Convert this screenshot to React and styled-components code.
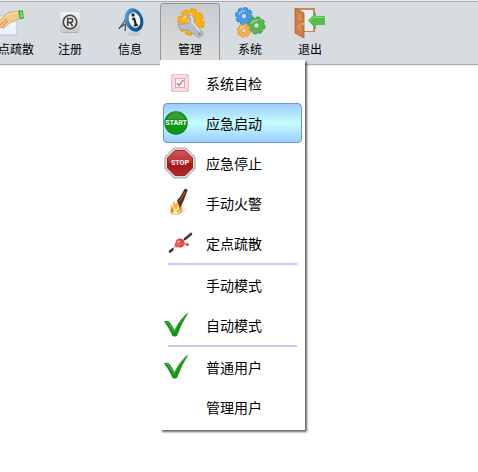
import { useState } from "react";
import styled, { createGlobalStyle } from "styled-components";

const tools = [
  { id: "evacuate", label: "定点疏散", Icon: HandIcon },
  { id: "register", label: "注册", Icon: RegisterIcon },
  { id: "info", label: "信息", Icon: InfoIcon },
  { id: "manage", label: "管理", Icon: WrenchIcon },
  { id: "system", label: "系统", Icon: GearsIcon },
  { id: "exit", label: "退出", Icon: ExitIcon },
];

const groups = [
  [
    { id: "check", label: "系统自检", Icon: SelfCheckIcon },
    { id: "start", label: "应急启动", Icon: StartIcon },
    { id: "stop", label: "应急停止", Icon: StopIcon },
    { id: "fire", label: "手动火警", Icon: TorchIcon },
    { id: "point", label: "定点疏散", Icon: PointIcon },
  ],
  [
    { id: "manual", label: "手动模式" },
    { id: "auto", label: "自动模式", Icon: TickIcon },
  ],
  [
    { id: "user", label: "普通用户", Icon: TickIcon },
    { id: "admin", label: "管理用户" },
  ],
];

export default function App() {
  const [open, setOpen] = useState(true);
  const [selected, setSelected] = useState("start");

  return (
    <>
      <GlobalStyle />
      <Toolbar>
        {tools.map(({ id, label, Icon }) => (
          <ToolSlot key={id}>
            <ToolButton
              type="button"
              $active={id === "manage" && open}
              onClick={() => setOpen(id === "manage" ? !open : false)}
            >
              <Icon />
              <span>{label}</span>
            </ToolButton>
            {id === "manage" && open && (
              <Menu role="menu">
                {groups.map((items, index) => (
                  <Group key={index} role="group">
                    {items.map((item) => (
                      <MenuItem
                        key={item.id}
                        type="button"
                        role="menuitem"
                        $selected={item.id === selected}
                        onMouseEnter={() => setSelected(item.id)}
                      >
                        <IconCell>{item.Icon && <item.Icon />}</IconCell>
                        <span>{item.label}</span>
                      </MenuItem>
                    ))}
                  </Group>
                ))}
              </Menu>
            )}
          </ToolSlot>
        ))}
      </Toolbar>
    </>
  );
}

function HandIcon() {
  return (
    <Picture viewBox="0 0 32 32">
      <path d="M4 9h19v19H4z" fill="#eef3fb" stroke="#b3c6e2" />
      <path d="M2 17l9-9q4-3 7-3l8-1v7l-5 3-4 1-7 6q-2 1-2-1l-4 2q-2 0-1-2z" fill="#f2c98b" stroke="#c99150" strokeWidth=".6" />
      <path d="M8 20l6-6M6 18l7-6" stroke="#bd8544" fill="none" />
      <path d="M13 8l6-2 5-1" stroke="#fde7bd" fill="none" />
      <path d="M24 3.500l5 0 1 8-4 1z" fill="#35b535" />
      <path d="M26 5l2 0 1 5-2 1z" fill="#8be179" />
    </Picture>
  );
}

function RegisterIcon() {
  return (
    <Picture viewBox="0 0 32 32">
      <defs>
        <linearGradient id="plate" x2="0" y2="1">
          <stop stopColor="#f4f4f4" />
          <stop offset="1" stopColor="#c3c5c6" />
        </linearGradient>
      </defs>
      <rect x="6" y="5" width="20" height="20.500" rx="3" fill="url(#plate)" />
      <path d="M8 25.500h16" stroke="#aeb1b3" />
      <circle cx="16" cy="15" r="6.700" fill="#ededed" stroke="#414141" strokeWidth="1.600" />
      <path d="M13.700 19v-7.500h2.800q2.200 0 2.200 2t-2.200 2h-2.500M16 15.500l2.700 3.500" fill="none" stroke="#414141" strokeWidth="1.600" />
    </Picture>
  );
}

function InfoIcon() {
  return (
    <Picture viewBox="0 0 32 32">
      <defs>
        <linearGradient id="ring" x2="1" y2="1">
          <stop stopColor="#78b6e5" />
          <stop offset=".5" stopColor="#1769ad" />
          <stop offset="1" stopColor="#0d4379" />
        </linearGradient>
      </defs>
      <ellipse cx="20" cy="27" rx="7" ry="2" fill="#c5cacf" />
      <path d="M12 12L5 22M12 14l-1 10M5 21l8-5" stroke="#4a4e53" strokeWidth="1.300" fill="none" />
      <ellipse cx="20" cy="13" rx="9" ry="12" fill="url(#ring)" transform="rotate(-18 20 13)" />
      <ellipse cx="20.500" cy="13" rx="5.600" ry="8" fill="#f6f7f7" transform="rotate(-18 20.500 13)" />
      <circle cx="19" cy="8" r="1.700" fill="#20252b" />
      <path d="M18 11l3-.5 2 7h1v1.500l-4 .5-.4-1.500 1-.5-1.200-4.500-1 .2z" fill="#20252b" />
    </Picture>
  );
}

function Gear({ cx, cy, r, fill, edge, hole }) {
  return (
    <g transform={`translate(${cx} ${cy}) scale(${r / 10})`}>
      {[0, 45, 90, 135].map((angle) => (
        <rect key={angle} x="-2.500" y="-10" width="5" height="20" rx="1" fill={fill} stroke={edge} strokeWidth=".8" transform={`rotate(${angle + 12})`} />
      ))}
      <circle r="7.600" fill={fill} />
      <path d="M-6 -2Q-4 -6 1 -6" stroke="#ffffff" strokeOpacity=".5" fill="none" strokeWidth="1.500" />
      <circle r="3.200" fill={hole} stroke={edge} strokeWidth=".8" />
    </g>
  );
}

function WrenchIcon() {
  return (
    <Picture viewBox="0 0 32 32">
      <Gear cx={17} cy={15} r={13} fill="#fbb013" edge="#ee9f12" hole="#d7d9db" />
      <path
        d="M4 17q0 6 6 6h4l9 6.500q3 1.500 5-.5t0-4.500l-8-8q2-6-3-8.500-2-1-5 0l4 4-1 4-4 1z"
        fill="#b9bdc6"
        stroke="#9499a4"
        strokeWidth=".8"
      />
      <path d="M17 9q2 2 1 6l8 9" fill="none" stroke="#e3e6eb" strokeWidth="1.500" />
      <circle cx="25.500" cy="27" r="1.200" fill="#7c828c" />
    </Picture>
  );
}

function GearsIcon() {
  return (
    <Picture viewBox="0 0 32 32">
      <Gear cx={10} cy={9} r={8.5} fill="#459cec" edge="#2871c1" hole="#d7dcdf" />
      <Gear cx={22.5} cy={18.5} r={8.5} fill="#55b94c" edge="#338d34" hole="#d7dcdf" />
      <Gear cx={10} cy={23.5} r={6.7} fill="#f5b04c" edge="#d28427" hole="#e5e6e6" />
    </Picture>
  );
}

function ExitIcon() {
  return (
    <Picture viewBox="0 0 32 32">
      <path d="M1 1h20v24H10z" fill="#c98955" />
      <path d="M3 3h16v21H8z" fill="#e9edf1" />
      <path d="M1 1l9 5v25L1 26z" fill="#cf7f43" stroke="#a85f2c" strokeWidth=".8" />
      <path d="M3 5l5 3v7l-5-2.500zM3 15l5 2.500v8L3 23z" fill="#d88d54" stroke="#c2753d" strokeWidth=".6" />
      <circle cx="8.800" cy="17" r=".9" fill="#f7d889" />
      <path d="M14 13.500l8-8V9h9v9h-9v4z" fill="#55bd48" />
      <path d="M16 13.500l5-4.500v1.500h10" fill="none" stroke="#8bdf78" />
    </Picture>
  );
}

function SelfCheckIcon() {
  return (
    <Picture viewBox="0 0 32 32">
      <rect x="7.500" y="7.500" width="17" height="17" rx="1" fill="#f9dfe3" stroke="#efb8be" />
      <path d="M8 8l4 4M24 8l-4 4M8 24l4-4M24 24l-4-4" stroke="#efb8be" />
      <rect x="11.500" y="11.500" width="9" height="9" fill="#fff6f6" stroke="#e9a5ab" />
      <path d="M13 16l2 2.500 4.500-5.500" fill="none" stroke="#d5737e" strokeWidth="1.400" />
    </Picture>
  );
}

function StartIcon() {
  return (
    <Picture viewBox="0 0 32 32">
      <circle cx="12" cy="16" r="11.700" fill="#087d0c" />
      <circle cx="12" cy="16" r="10.700" fill="#109711" />
      <path d="M3 12q3-7 9-7t9 7z" fill="#369e35" />
      <BadgeText x="12" y="18" textAnchor="middle">START</BadgeText>
    </Picture>
  );
}

function StopIcon() {
  return (
    <Picture viewBox="0 0 32 32">
      <defs>
        <linearGradient id="stop" x2="0" y2="1">
          <stop stopColor="#d1595a" />
          <stop offset=".48" stopColor="#bd2d31" />
          <stop offset=".5" stopColor="#a21419" />
          <stop offset="1" stopColor="#b42b2c" />
        </linearGradient>
      </defs>
      <path d="M10 1h12l9 9v12l-9 9H10l-9-9V10z" fill="#dadada" stroke="#a5a5a5" />
      <path d="M11 3.500h10l7.500 7.500v10L21 28.500H11L3.500 21V11z" fill="url(#stop)" stroke="#982326" />
      <BadgeText x="16" y="18" textAnchor="middle">STOP</BadgeText>
    </Picture>
  );
}

function TorchIcon() {
  return (
    <Picture viewBox="0 0 32 32">
      <path d="M15 27q7-1 9-7-5 3-9 7" fill="#ececec" />
      <path d="M11 28q-5 0-5-4l1-3-1-4 3 3 0-6 3 3 2-4 3 4 2 6q-2 5-8 5z" fill="#f7b347" />
      <path d="M12 28q-5-1-4-5l2 2-1-6 3 4 2-5q4 7-2 10" fill="#fff1a4" />
      <path d="M7 24l2 1-1-4M16 15l0 7-3 3" fill="none" stroke="#dd6421" />
      <path d="M20.500 2q3-1 3 1.500L20 13l-4 8-2-5-1-3 3-3z" fill="#623022" />
      <path d="M21 5l-4 7-2 2" fill="none" stroke="#a76543" />
    </Picture>
  );
}

function PointIcon() {
  return (
    <Picture viewBox="0 0 32 32">
      <path d="M6 24L27 7" stroke="#a87a7d" strokeWidth="1" />
      <path d="M6 24.500l2.500-2M21 12l6-5" stroke="#343742" strokeWidth="2.600" strokeLinecap="round" />
      <path d="M22 10l5-4" stroke="#c94750" strokeWidth="1" />
      <circle cx="16" cy="16" r="4.500" fill="#df3d3e" />
      <path d="M11 18l4-5 3 4-5 3zM17 17h6" fill="#ec6059" stroke="#e85e58" strokeWidth="1.300" />
      <circle cx="23.500" cy="17.500" r="1.500" fill="#e64b48" />
      <path d="M13 15l3-1" stroke="#ffaaa0" strokeWidth="1.500" />
    </Picture>
  );
}

function TickIcon() {
  return (
    <Picture viewBox="0 0 32 32">
      <path d="M.5 12.500q3-1 5 1l5 8q6-12 13-17-6 9-11 22.500H9Q5 18 .5 12.500z" fill="#11960f" stroke="#197d1c" strokeWidth=".8" />
      <path d="M2 13q2 0 3 2l5 8q4-9 10-15" fill="none" stroke="#4ebb45" />
    </Picture>
  );
}

const GlobalStyle = createGlobalStyle`
  * {
    box-sizing: border-box;
  }

  body {
    margin: 0;
    min-height: 100vh;
    padding-top: 1px;
    background-color: #ffffff;
  }

  button {
    font-family: "Noto Sans CJK SC", sans-serif;
    color: #000000;
    white-space: nowrap;
    cursor: pointer;
  }
`;

const Toolbar = styled.nav`
  display: flex;
  padding-top: 1px;
  background-color: #d7dce0;
  border-top: 1px solid #a9acae;
  border-bottom: 1px solid #a9acae;
  box-shadow: 0 -1px #f0f0f0, 0 1px #f0f0f0;

  > :first-child {
    margin-left: -20px;
  }
`;

const ToolSlot = styled.div`
  position: relative;
  flex: none;
  width: 60px;
`;

const ToolButton = styled.button`
  display: flex;
  flex-direction: column;
  align-items: center;
  width: 100%;
  padding: 3px 0 4px;
  border: 1px solid ${({ $active }) => ($active ? "#929699" : "transparent")};
  border-radius: 3px;
  background: ${({ $active }) => ($active ? "linear-gradient(#c9cccf, #dedede)" : "none")};
  font-size: 12px;
  line-height: 20px;
`;

const Menu = styled.div`
  position: absolute;
  top: 57px;
  left: 0;
  z-index: 1;
  width: 145px;
  padding: 3px;
  background-color: #ffffff;
  box-shadow: 2px 2px 2px rgba(0, 0, 0, 0.6);
`;

const Group = styled.div`
  & + &::before {
    content: "";
    display: block;
    height: 2px;
    margin: 0 5px;
    background-color: #c8c8fa;
  }
`;

const MenuItem = styled.button`
  display: flex;
  align-items: center;
  gap: 10px;
  width: 100%;
  height: 40px;
  padding: 0;
  border: 1px solid ${({ $selected }) => ($selected ? "#6499cf" : "transparent")};
  border-radius: 4px;
  background: ${({ $selected }) => ($selected ? "linear-gradient(#9ccdff, #c5fcff 50%, #9ccdff)" : "none")};
  font-size: 14px;
  line-height: 20px;
`;

const IconCell = styled.span`
  display: flex;
  flex: none;
  width: 32px;
  height: 32px;
`;

const Picture = styled.svg`
  display: block;
  flex: none;
  width: 32px;
  height: 32px;
`;

const BadgeText = styled.text`
  fill: #ffffff;
  font-family: Roboto, sans-serif;
  font-size: 7px;
  font-weight: bold;
`;
